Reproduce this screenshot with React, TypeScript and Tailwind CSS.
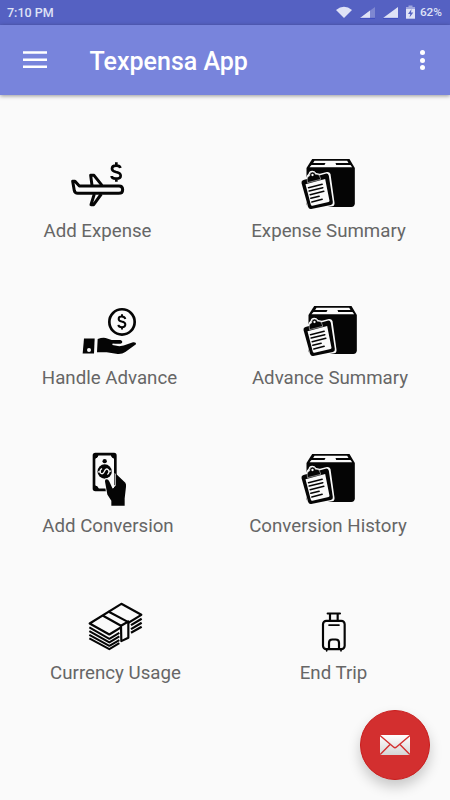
import type { ReactNode } from 'react';

function Icon({ box, children }: { box: string; children: ReactNode }) {
  return (
    <svg viewBox={box} className="block h-[65px] w-[75px] shrink-0" fill="none" stroke="none">
      {children}
    </svg>
  );
}

function Plane() {
  return (
    <Icon box="0 0 225 195">
      <g stroke="#050505" strokeWidth="9" strokeLinejoin="round">
        <path d="M96 106 L92 76 H102 L126 106" fill="#fafafa" />
        <path d="M103 132 L93 164 H101 L124 132" fill="#fafafa" />
        <path d="M38 94 H45 L58 108 H177 Q188 108 188 119 Q188 130 176 130 H53 Q45 130 43 122 Z" fill="#fafafa" />
      </g>
      <path d="M181 54 Q180 47 168 47 Q156 47 156 56 Q156 63 168 66 Q182 69 182 77 Q182 86 168 86 Q155 86 155 78 M169 37 V48 M169 86 V95" stroke="#050505" strokeWidth="8" />
    </Icon>
  );
}

function BoxClipboard() {
  return (
    <Icon box="-10.5 0 225 195">
      <path d="M53 27 H165 L181 54 V160 Q181 171 170 171 H46 Q36 171 36 160 V54 Z" fill="#050505" />
      <path d="M60 32 H158 L162 39 H123 L125 45 H168 L173 52 H45 L51 45 H90 L93 39 H56Z" fill="#fafafa" />
      <path d="M22 88 L34 84 L38 76 L42 71 Q44 62 53 62 Q61 62 65 69 L76 71 L97 66 Q105 65 108 72 L120 158 Q121 167 113 169 L48 180 Q42 181 40 174 L19 99 Q18 91 22 88Z" fill="#fafafa" />
      <path d="M27 90 L93 71 Q101 69 103 77 L115 156 Q116 163 109 165 L50 177 Q43 178 41 171 L21 99 Q20 92 27 90Z" fill="#050505" />
      <path d="M33 103 L92 87 L105 152 Q105 155 102 156 L54 167 Q50 168 49 164Z" fill="#fafafa" />
      <path d="M39 98 L38 87 Q38 80 45 78 Q45 66 54 66 Q61 66 63 73 Q73 71 75 78 L79 88Z" fill="#050505" stroke="#fafafa" strokeWidth="1.5" />
      <circle cx="54" cy="75" r="3.5" fill="#fafafa" />
      <path d="M42 113 L83 103 M44 123 L85 113 M47 134 L88 124 M49 145 L74 139 M52 156 L83 148" stroke="#050505" strokeWidth="4.5" strokeLinecap="round" />
    </Icon>
  );
}

function HandCoin() {
  return (
    <Icon box="-9 -7.8 225 195">
      <circle cx="141" cy="67" r="38" stroke="#050505" strokeWidth="8" />
      <path d="M151 58 Q149 51 140 51 Q131 51 131 58 Q131 64 140 66 Q151 68 151 75 Q151 83 141 83 Q131 83 130 76 M141 44 V51 M141 83 V90" stroke="#050505" strokeWidth="6" />
      <path d="M27 117 H59 L57 162 H23Z" fill="#050505" />
      <circle cx="42" cy="151" r="6" fill="#fafafa" />
      <path d="M68 118 Q82 113 92 115 L110 121 H136 Q144 124 141 130 Q137 134 113 132 L112 136 L133 140 L146 138 L174 128 Q184 127 183 134 L151 157 Q141 164 128 163 L95 158 H66Z" fill="#050505" />
    </Icon>
  );
}

function Banknote() {
  return (
    <Icon box="-30 -0.6 225 195">
      <rect x="39" y="27" width="64" height="107" rx="4" fill="#fafafa" stroke="#050505" strokeWidth="8" />
      <path d="M39 27 H52 Q51 39 39 40Z M90 27 H103 V40 Q91 39 90 27Z M39 121 V134 H53 Q52 122 39 121Z" fill="#050505" stroke="#050505" strokeWidth="3" />
      <circle cx="71" cy="48" r="6.5" fill="#050505" />
      <circle cx="71" cy="79" r="21.5" fill="#050505" />
      <path d="M63 70 Q55 75 58 83 Q65 90 70 79 Q75 67 82 74 Q87 82 79 88 M51 80 H57 M84 78 H91" stroke="#fafafa" strokeWidth="4" />
      <path d="M72 108 Q71 101 77 101 Q82 101 85 109 L93 128 L103 120 V88 L132 115 V160 L131 182 H91 V167 L78 148Z" stroke="#fafafa" strokeWidth="4" />
      <path d="M72 109 Q71 102 77 102 Q82 102 85 109 L95 131 L104 124 V85 L133 113 Q136 117 135 125 L131 160 V182 H91 V167 L79 148Z" fill="#050505" />
    </Icon>
  );
}

function MoneyStack() {
  return (
    <Icon box="-6 -8.4 225 195">
      <g stroke="#050505" strokeWidth="6.5" strokeLinejoin="round">
        <path d="M29 86 L124 27 L184 60 L88 119Z" />
        <path d="M28 98 L88 132 L118 114 M28 109 L88 143 L118 125 M28 120 L88 153 L118 136 M28 131 L88 163 L118 145" strokeWidth="6" />
        <path d="M153 91 L185 72 M153 103 L185 84 M153 114 L185 96" />
        <path d="M123 93 L145 80 V129 L124 139Z" fill="#fafafa" />
        <path d="M68 62 L123 93 M85 50 L145 82" />
      </g>
    </Icon>
  );
}

function Suitcase() {
  return (
    <Icon box="-42 -38.4 225 195">
      <g stroke="#050505" strokeLinecap="round">
        <rect x="39" y="48" width="65" height="85" rx="10" strokeWidth="6.5" />
        <path d="M53 26 H90 M60 28 V46 M83 28 V46" strokeWidth="6.5" />
        <path d="M57 61 H87" strokeWidth="5" />
        <path d="M57 132 V114 Q57 104 67 104 H77 Q87 104 87 114 V132" strokeWidth="6.5" />
        <path d="M50 135 V138 M93 135 V138" strokeWidth="5" />
      </g>
    </Icon>
  );
}

const items: { label: string; icon: ReactNode; place: string }[] = [
  { label: 'Add Expense', icon: <Plane />, place: 'ml-[8px]' },
  { label: 'Expense Summary', icon: <BoxClipboard />, place: 'ml-[18px]' },
  { label: 'Handle Advance', icon: <HandCoin />, place: 'ml-[20px]' },
  { label: 'Advance Summary', icon: <BoxClipboard />, place: 'ml-[19.5px]' },
  { label: 'Add Conversion', icon: <Banknote />, place: 'ml-[18.5px]' },
  { label: 'Conversion History', icon: <BoxClipboard />, place: 'ml-[17.5px]' },
  { label: 'Currency Usage', icon: <MoneyStack />, place: 'ml-[26px]' },
  { label: 'End Trip', icon: <Suitcase />, place: 'ml-[23px]' },
];

export default function App() {
  return (
    <div className="relative flex h-[800px] w-[450px] flex-col overflow-hidden bg-[#fafafa] font-['Roboto',sans-serif]">
      <div className="flex h-[25px] shrink-0 items-center justify-between bg-[#5561c2] pr-[8px] pl-[7px] text-[12px] font-medium text-[#dfe2f6]">
        <span className="pt-px text-[12.5px]">7:10 PM</span>
        <div className="flex items-center">
          <svg viewBox="336 0 80 25" className="h-[25px] w-[80px]" fill="#dfe2f6">
            <path d="M336 10 Q344 3.5 352 10 L344 18Z" />
            <path d="M360 18 L375 7 V18Z" opacity="0.3" />
            <path d="M360 18 L370 10.6 V18Z M383 18 L398 7 V18Z" />
            <path d="M360 18.3 H375 M383 18.3 H398" stroke="#3440bd" strokeWidth="0.7" />
            <path d="M406 9 V7 H408.5 V5.5 H412.5 V7 H415 V9Z" opacity="0.55" />
            <path d="M406 9 H415 V18.7 H406Z" />
            <path d="M411.5 9 L408 14 H410.3 L409.5 17.5 L413.3 12.5 H411Z" fill="#5561c2" />
          </svg>
          <span className="ml-[4px] pt-px text-[11.8px]">62%</span>
        </div>
      </div>
      <header className="z-10 flex h-[70px] shrink-0 items-center bg-[#7884dc] pl-[23px] text-white shadow-[0_1px_4px_rgba(0,0,0,0.4)]">
        <svg viewBox="0 0 24 18" className="h-[18px] w-[24px]" fill="#ffffff">
          <path d="M0 0.3 H24 V2.8 H0Z M0 7.4 H24 V9.9 H0Z M0 14.4 H24 V16.9 H0Z" />
        </svg>
        <h1 className="ml-[42.5px] pt-[2px] text-[25px] leading-none font-medium">Texpensa App</h1>
        <div className="mr-[25px] ml-auto flex flex-col gap-[2.4px]">
          <span className="size-[5px] rounded-full bg-white" />
          <span className="size-[5px] rounded-full bg-white" />
          <span className="size-[5px] rounded-full bg-white" />
        </div>
      </header>
      <main className="grid grid-cols-[215px_200px] gap-x-[6px] pt-[55px] pl-[8px]">
        {items.map(({ label, icon, place }) => (
          <div key={label} className="flex h-[147.4px]">
            <div className={`flex w-[163px] shrink-0 flex-col items-center ${place}`}>
              {icon}
              <span className="mt-[4px] text-[18.7px] leading-[24px] whitespace-nowrap text-[#666666]">{label}</span>
            </div>
          </div>
        ))}
      </main>
      <button className="absolute top-[710px] left-[360px] z-20 flex size-[70px] items-center justify-center rounded-full border border-[#c91c1c] bg-[#d32f2f] shadow-[0_7px_13px_rgba(0,0,0,0.2)]">
        <svg viewBox="0 0 32 22" className="h-[22px] w-[32px]">
          <defs>
            <linearGradient id="paper" x1="0" y1="0" x2="0" y2="1">
              <stop offset="0" stopColor="#ffffff" />
              <stop offset="1" stopColor="#d5d5d5" />
            </linearGradient>
          </defs>
          <rect x="1" y="1" width="30" height="20" rx="0.8" fill="url(#paper)" />
          <path d="M1 1.5 L14.5 13 Q16 14.3 17.5 13 L31 1.5 M1.2 20.5 L11 10.5 M30.8 20.5 L21 10.5" fill="none" stroke="#d32f2f" strokeWidth="1.4" />
        </svg>
      </button>
    </div>
  );
}
